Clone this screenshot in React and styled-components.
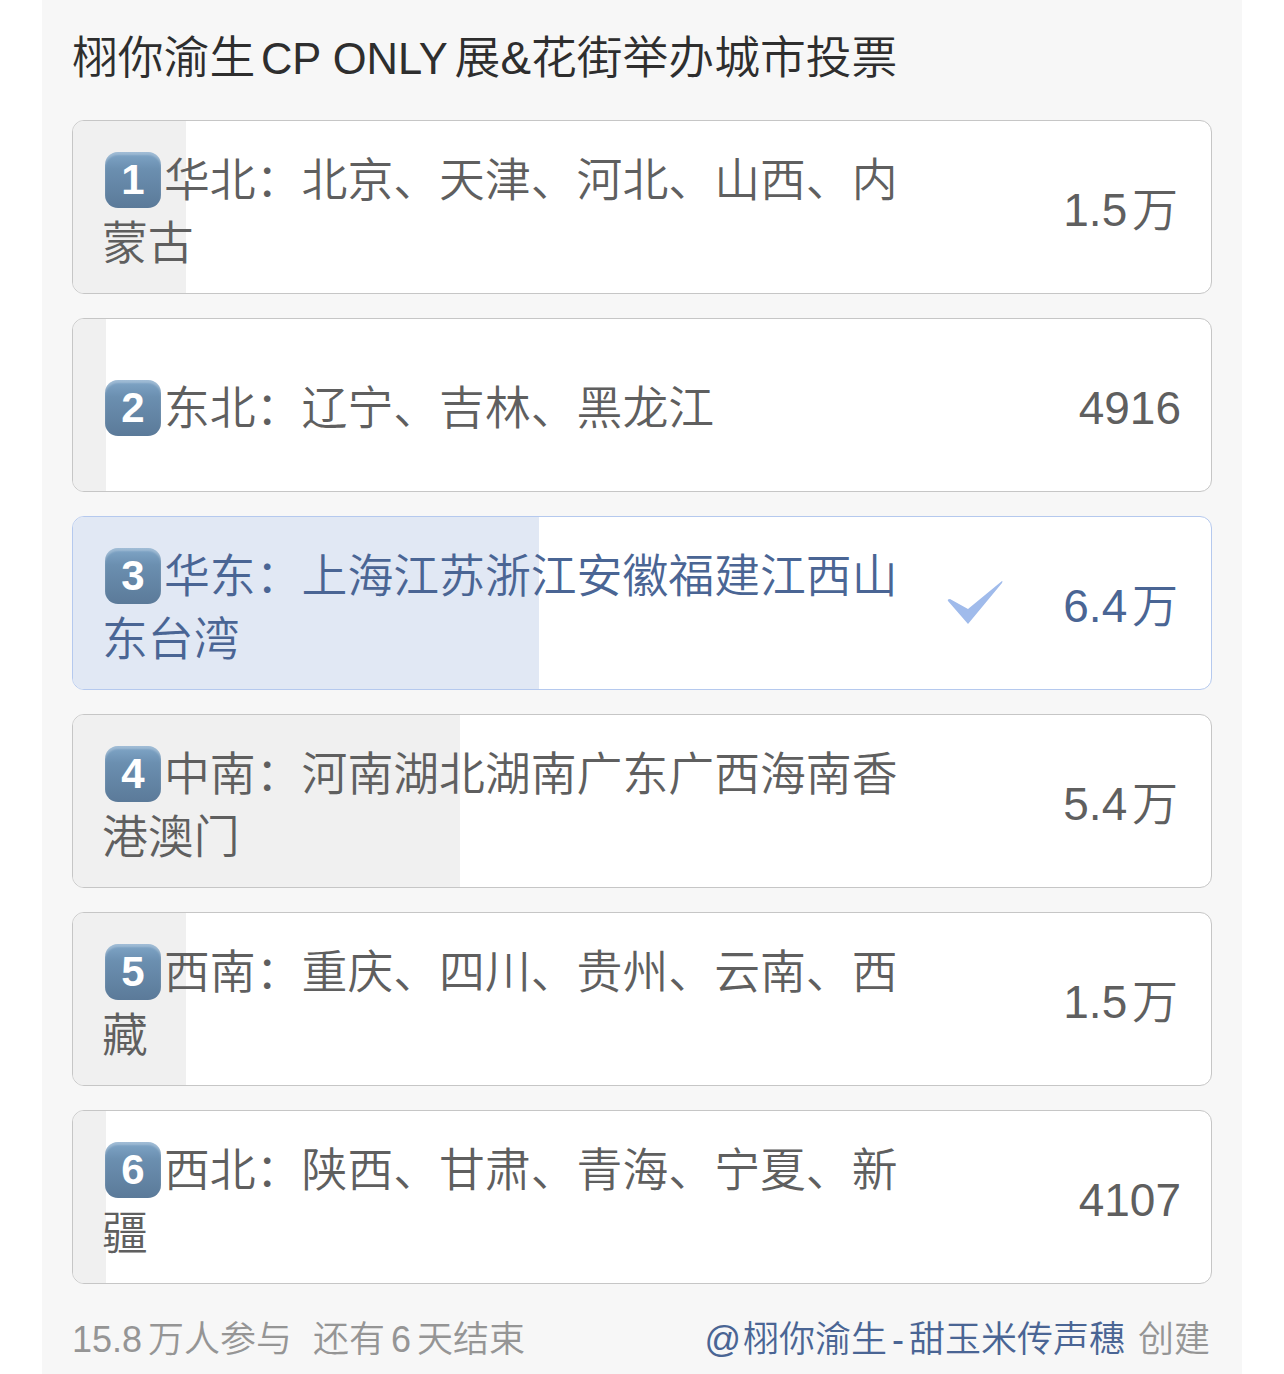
import { createGlobalStyle } from "styled-components";
import styled from "styled-components";

const GlobalStyle = createGlobalStyle`
  html, body {
    margin: 0;
    background: #fff;
    font-family: "Liberation Sans", "Noto Sans CJK SC", sans-serif;
  }
`;

const Panel = styled.div`
  box-sizing: border-box;
  width: 1200px;
  height: 1374px;
  margin-left: 42px;
  padding: 30px 30px 0;
  background: #f7f7f7;
  overflow: hidden;
`;

const Title = styled.h1`
  height: 58px;
  margin: 0 0 32px;
  font-size: 45.8px;
  font-weight: 350;
  line-height: 58px;
  word-spacing: -7px;
  color: #2e2e2e;
  white-space: nowrap;
`;

// latin part of the title runs a bit smaller than the cjk around it
const TitleLatin = styled.span`
  margin-right: 1px;
  font-size: 43.5px;
  word-spacing: 0;
`;

const List = styled.div`
  display: flex;
  flex-direction: column;
  gap: 24px;
`;

const Option = styled.div`
  position: relative;
  box-sizing: border-box;
  height: 174px;
  display: flex;
  align-items: center;
  padding: 6px 30px 0 29px;
  background: #fff;
  border: 1px solid ${(p) => (p.$selected ? "#b5c9ee" : "#c6c6c6")};
  border-radius: 12px;
  overflow: hidden;
  color: ${(p) => (p.$selected ? "#4a6594" : "#5f5f5f")};
`;

const Fill = styled.div`
  position: absolute;
  left: 0;
  top: 0;
  bottom: 0;
  background: ${(p) => (p.$selected ? "#e1e8f4" : "#f0f0f0")};
`;

const Label = styled.div`
  position: relative;
  flex: none;
  width: 802px;
  margin-top: ${(p) => (p.$short ? "0" : "4px")};
  font-size: 45.85px;
  font-weight: 350;
  line-height: 63px;
`;

const Keycap = styled.span`
  display: inline-block;
  box-sizing: border-box;
  width: 56px;
  height: 56px;
  margin: 0 3px 0 3px;
  vertical-align: 2px;
  border-radius: 13px;
  background: linear-gradient(180deg, #80a6c8 0%, #6b8fb0 30%, #5b7a99 100%);
  box-shadow: inset 0 3px 2px rgba(255, 255, 255, 0.25);
  color: #fff;
  font-size: 42px;
  font-weight: 700;
  line-height: 56px;
  text-align: center;
`;

const Check = styled.svg`
  position: relative;
  flex: none;
  width: 56px;
  height: 46px;
  margin: 0 0 6px 43px;
`;

const Count = styled.div`
  position: relative;
  margin-left: auto;
  margin-right: ${(p) => (p.$wan ? "3px" : "0")};
  font-size: 46px;
  font-weight: 350;
  line-height: 63px;
  word-spacing: -8px;
  white-space: nowrap;
`;

const Footer = styled.div`
  display: flex;
  justify-content: space-between;
  margin-top: 31px;
  padding-right: 2px;
  font-size: 36px;
  font-weight: 350;
  line-height: 50px;
  color: #959595;
  white-space: nowrap;
`;

const Stats = styled.div`
  display: flex;
  gap: 21px;
  word-spacing: -4px;
`;

const Credit = styled.div`
  word-spacing: 3px;
`;

const Author = styled.span`
  color: #4a6594;
`;

const Symbol = styled.span`
  padding: 0 ${(p) => p.$pad}px;
`;

const options = [
  { n: 1, text: "华北：北京、天津、河北、山西、内蒙古", count: "1.5 万", pct: 9.9 },
  { n: 2, text: "东北：辽宁、吉林、黑龙江", count: "4916", pct: 2.9, short: true },
  { n: 3, text: "华东：上海江苏浙江安徽福建江西山东台湾", count: "6.4 万", pct: 40.95, selected: true },
  { n: 4, text: "中南：河南湖北湖南广东广西海南香港澳门", count: "5.4 万", pct: 34 },
  { n: 5, text: "西南：重庆、四川、贵州、云南、西藏", count: "1.5 万", pct: 9.9 },
  { n: 6, text: "西北：陕西、甘肃、青海、宁夏、新疆", count: "4107", pct: 2.9 },
];

const App = () => {
  return (
    <Panel>
      <GlobalStyle />
      <Title>
        栩你渝生 <TitleLatin>CP ONLY</TitleLatin> 展&花街举办城市投票
      </Title>
      <List>
        {options.map((o) => (
          <Option key={o.n} $selected={o.selected}>
            <Fill $selected={o.selected} style={{ width: `${o.pct}%` }} />
            <Label $short={o.short}>
              <Keycap>{o.n}</Keycap>
              {o.text}
            </Label>
            {o.selected && (
              <Check viewBox="0 0 56 46">
                <path d="M1 21 Q0 19 3 19 L21 29 L55 1 Q56 1 55 3 L21 44 Z" fill="#a0bbeb" />
              </Check>
            )}
            <Count $wan={o.count.includes("万")}>{o.count}</Count>
          </Option>
        ))}
      </List>
      <Footer>
        <Stats>
          <span>15.8 万人参与</span>
          <span>还有 6 天结束</span>
        </Stats>
        <Credit>
          <Author>
            @<Symbol $pad={1} />栩你渝生<Symbol $pad={5}>-</Symbol>甜玉米传声穗
          </Author>{" "}
          创建
        </Credit>
      </Footer>
    </Panel>
  );
};

export default App;
